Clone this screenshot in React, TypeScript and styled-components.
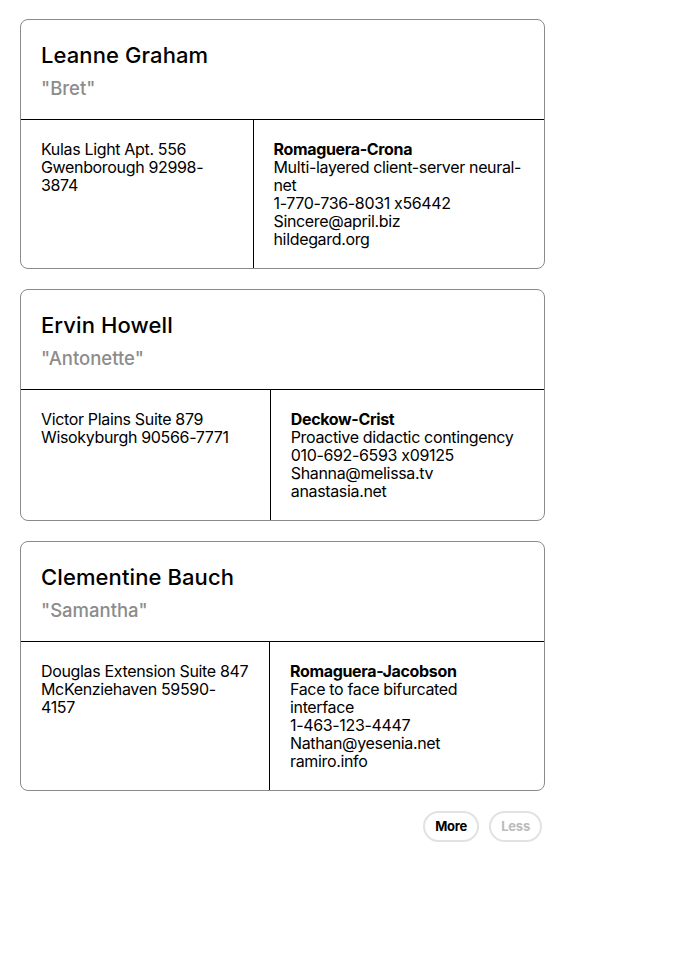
import React, { useState } from 'react'
import styled, { createGlobalStyle } from 'styled-components'

interface User {
  name: string
  username: string
  street: string
  suite: string
  city: string
  zipcode: string
  company: string
  catchPhrase: string
  phone: string
  email: string
  website: string
}

const users: User[] = [
  {
    name: 'Leanne Graham',
    username: 'Bret',
    street: 'Kulas Light',
    suite: 'Apt. 556',
    city: 'Gwenborough',
    zipcode: '92998-3874',
    company: 'Romaguera-Crona',
    catchPhrase: 'Multi-layered client-server neural-net',
    phone: '1-770-736-8031 x56442',
    email: 'Sincere@april.biz',
    website: 'hildegard.org',
  },
  {
    name: 'Ervin Howell',
    username: 'Antonette',
    street: 'Victor Plains',
    suite: 'Suite 879',
    city: 'Wisokyburgh',
    zipcode: '90566-7771',
    company: 'Deckow-Crist',
    catchPhrase: 'Proactive didactic contingency',
    phone: '010-692-6593 x09125',
    email: 'Shanna@melissa.tv',
    website: 'anastasia.net',
  },
  {
    name: 'Clementine Bauch',
    username: 'Samantha',
    street: 'Douglas Extension',
    suite: 'Suite 847',
    city: 'McKenziehaven',
    zipcode: '59590-4157',
    company: 'Romaguera-Jacobson',
    catchPhrase: 'Face to face bifurcated interface',
    phone: '1-463-123-4447',
    email: 'Nathan@yesenia.net',
    website: 'ramiro.info',
  },
]

const GlobalStyle = createGlobalStyle`
  body {
    margin: 0;
    font-family: Inter, "Noto Sans", sans-serif;
    font-feature-settings: "calt" 0;
    color: #000;
    background: #fff;
  }
`

const Page = styled.div`
  width: 525px;
  padding: 19px 20px;
  display: flex;
  flex-direction: column;
  gap: 20px;
`

const Card = styled.div`
  border: 1px solid #8a8a8a;
  border-radius: 8px;
  overflow: hidden;
`

const Header = styled.div`
  padding: 20px 20px 21px;
  border-bottom: 1px solid #000;
`

const Name = styled.h2`
  margin: 0 0 8px;
  font-size: 22px;
  font-weight: 500;
  line-height: 30px;
  letter-spacing: 0.1px;
`

const Nick = styled.div`
  font-size: 18.5px;
  font-weight: 500;
  line-height: 20px;
  color: #8c8c8c;
`

const Body = styled.div`
  display: flex;
`

// address grows more, company column gives way first when space runs out
const Col = styled.div<{ $divider?: boolean }>`
  flex: ${({ $divider }) => ($divider ? '1 2 auto' : '2 1 auto')};
  padding: 20px;
  font-size: 16px;
  line-height: 18px;
  letter-spacing: -0.34px;
  border-left: ${({ $divider }) => ($divider ? '1px solid #000' : 'none')};
`

const Line = styled.div<{ $bold?: boolean }>`
  font-weight: ${({ $bold }) => ($bold ? 700 : 400)};
`

const Controls = styled.div`
  display: flex;
  justify-content: flex-end;
  gap: 10px;
  padding-right: 3px;
`

const Pill = styled.button<{ $muted?: boolean }>`
  font-family: Inter, "Noto Sans", sans-serif;
  font-size: 13px;
  font-weight: 700;
  line-height: 15px;
  letter-spacing: -0.2px;
  padding: 6px 10px;
  border: 2px solid #e2e2e2;
  border-radius: 16px;
  background: #fff;
  color: ${({ $muted }) => ($muted ? '#bbb' : '#000')};
  cursor: ${({ $muted }) => ($muted ? 'default' : 'pointer')};
`

const UserCard: React.FunctionComponent<{ user: User }> = ({ user }) => (
  <Card>
    <Header>
      <Name>{user.name}</Name>
      <Nick>"{user.username}"</Nick>
    </Header>
    <Body>
      <Col>
        <Line>{user.street} {user.suite}</Line>
        <Line>{user.city} {user.zipcode}</Line>
      </Col>
      <Col $divider>
        <Line $bold>{user.company}</Line>
        <Line>{user.catchPhrase}</Line>
        <Line>{user.phone}</Line>
        <Line>{user.email}</Line>
        <Line>{user.website}</Line>
      </Col>
    </Body>
  </Card>
)

export default function App() {
  const [count, setCount] = useState(3)

  return (
    <>
      <GlobalStyle />
      <Page>
        {users.slice(0, count).map((u) => (
          <UserCard key={u.name} user={u} />
        ))}
        <Controls>
          <Pill onClick={() => setCount(Math.min(users.length, count + 1))}>More</Pill>
          <Pill $muted onClick={() => setCount(Math.max(1, count - 1))}>Less</Pill>
        </Controls>
      </Page>
    </>
  )
}
